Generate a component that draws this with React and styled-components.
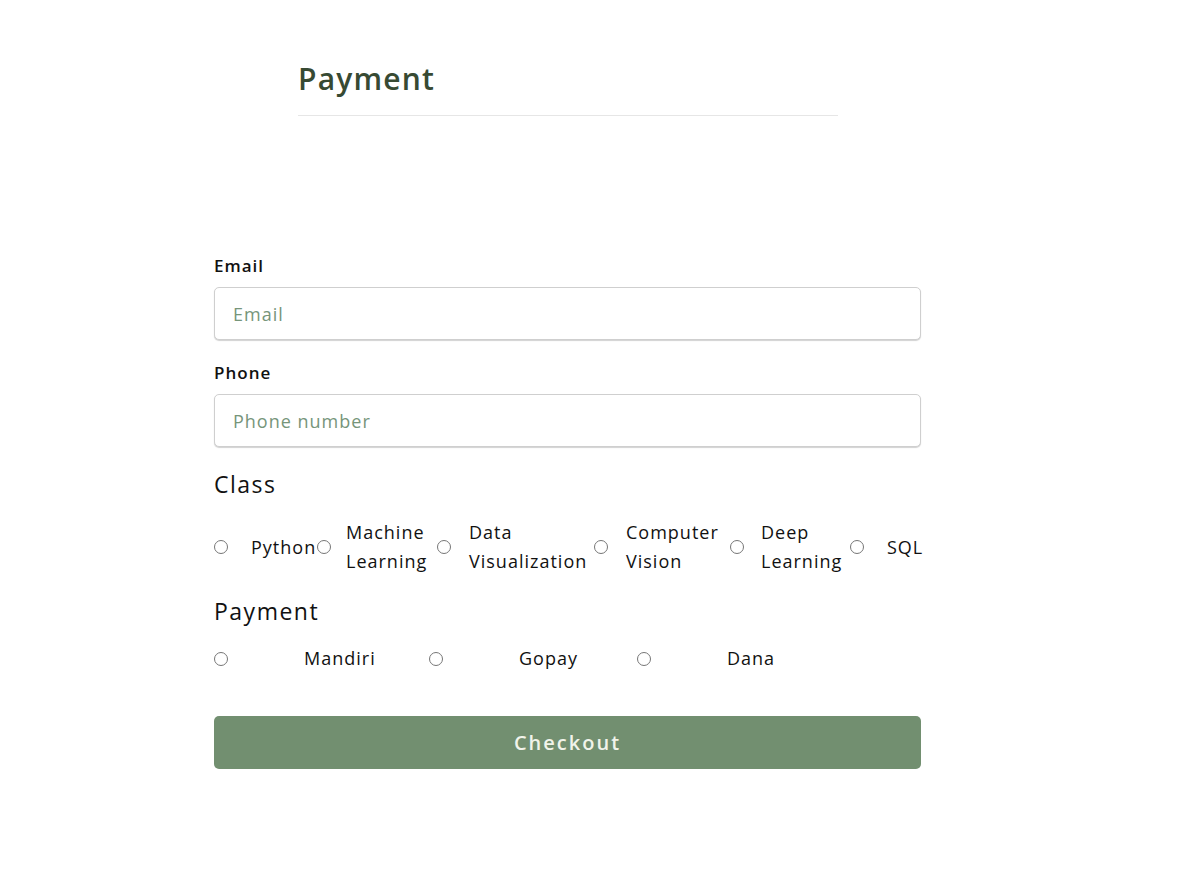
import React from "react";
import styled, { createGlobalStyle } from "styled-components";

const Global = createGlobalStyle`
  * { box-sizing: border-box; }
  body {
    margin: 0;
    background: #ffffff;
    font-family: "Open Sans", "Noto Sans", sans-serif;
    color: #111;
  }
`;

const Page = styled.div`
  display: flex;
  flex-direction: column;
  padding-top: 56px;
  padding-bottom: 120px;
`;

const Header = styled.header`
  width: 540px;
  margin-left: 298px;
  border-bottom: 1px solid #e6e6e6;
  padding-bottom: 14px;
`;

const Title = styled.h1`
  margin: 0;
  font-size: 30px;
  line-height: 45px;
  font-weight: 600;
  letter-spacing: 1.2px;
  color: #374a33;
`;

const Form = styled.form`
  width: 707px;
  margin-left: 214px;
  margin-top: 138px;
  display: flex;
  flex-direction: column;
`;

const Field = styled.div`
  display: flex;
  flex-direction: column;
  gap: 9px;
  margin-bottom: 21px;
`;

const Label = styled.label`
  font-size: 17px;
  line-height: 24px;
  font-weight: 600;
  letter-spacing: 1px;
  color: #111;
`;

const Input = styled.input`
  height: 53px;
  width: 100%;
  border: 1px solid #cfcfcf;
  border-radius: 5px;
  box-shadow: 0 1px 1px rgba(0, 0, 0, 0.18);
  padding: 0 18px;
  font-family: inherit;
  font-size: 18px;
  letter-spacing: 1px;
  color: #222;
  outline: none;
  &::placeholder {
    color: #76957a;
  }
`;

const Section = styled.h2`
  margin: 0;
  font-size: 23px;
  line-height: 33px;
  font-weight: 500;
  letter-spacing: 1.5px;
  color: #111;
`;

const ClassRow = styled.div`
  display: flex;
  align-items: center;
  margin-top: 17px;
  margin-bottom: 19px;
`;

const PayRow = styled.div`
  display: flex;
  align-items: center;
  margin-top: 16px;
  margin-bottom: 43px;
`;

const Option = styled.label`
  display: flex;
  align-items: center;
  gap: ${(p) => p.$gap}px;
  width: ${(p) => (p.$width ? `${p.$width}px` : "auto")};
  flex: none;
  font-size: 18px;
  line-height: 29px;
  letter-spacing: 1px;
  color: #111;
`;

const Radio = styled.input.attrs({ type: "radio" })`
  margin: 0;
  width: 14px;
  height: 14px;
  flex: none;
`;

const OptText = styled.span`
  white-space: nowrap;
`;

const Button = styled.button`
  height: 53px;
  width: 100%;
  border: none;
  border-radius: 5px;
  background: #728f70;
  color: #f1f3ea;
  font-family: inherit;
  font-size: 20px;
  font-weight: 600;
  letter-spacing: 2px;
  cursor: pointer;
`;

const classes = [
  { lines: ["Python"], w: 103, g: 23 },
  { lines: ["Machine", "Learning"], w: 120, g: 15 },
  { lines: ["Data", "Visualization"], w: 157, g: 18 },
  { lines: ["Computer", "Vision"], w: 136, g: 18 },
  { lines: ["Deep", "Learning"], w: 120, g: 17 },
  { lines: ["SQL"], w: 71, g: 23 },
];

const payments = [
  { name: "Mandiri", w: 215 },
  { name: "Gopay", w: 208 },
  { name: "Dana", w: 150 },
];

export default function App() {
  return (
    <>
      <Global />
      <Page>
        <Header>
          <Title>Payment</Title>
        </Header>
        <Form onSubmit={(e) => e.preventDefault()}>
          <Field>
            <Label htmlFor="email">Email</Label>
            <Input id="email" type="email" placeholder="Email" />
          </Field>
          <Field>
            <Label htmlFor="phone">Phone</Label>
            <Input id="phone" type="tel" placeholder="Phone number" />
          </Field>
          <Section>Class</Section>
          <ClassRow>
            {classes.map((c) => (
              <Option key={c.lines.join(" ")} $width={c.w} $gap={c.g}>
                <Radio name="class" />
                <OptText>
                  {c.lines.map((l, i) => (
                    <React.Fragment key={l}>
                      {i > 0 && <br />}
                      {l}
                    </React.Fragment>
                  ))}
                </OptText>
              </Option>
            ))}
          </ClassRow>
          <Section>Payment</Section>
          <PayRow>
            {payments.map((p) => (
              <Option key={p.name} $width={p.w} $gap={76}>
                <Radio name="payment" />
                <OptText>{p.name}</OptText>
              </Option>
            ))}
          </PayRow>
          <Button type="submit">Checkout</Button>
        </Form>
      </Page>
    </>
  );
}
